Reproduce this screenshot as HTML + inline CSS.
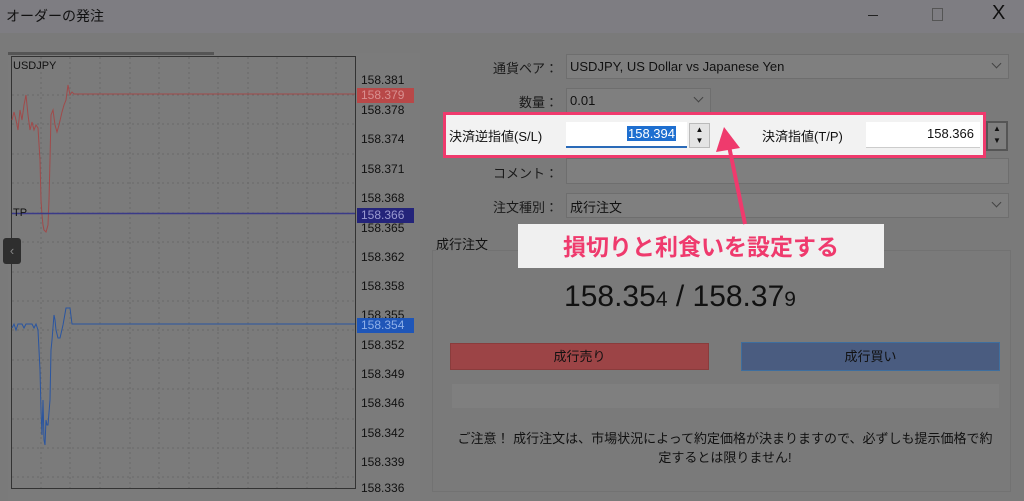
<!DOCTYPE html>
<html><head><meta charset="utf-8"><style>
*{margin:0;padding:0;box-sizing:border-box}
body{width:1024px;height:501px;overflow:hidden;background:#7a7a7a;font-family:"Liberation Sans","Noto Sans CJK JP",sans-serif;color:#111;position:relative}
.a{position:absolute}
.lbl{position:absolute;font-size:13px;color:#1a1a1a;text-align:right;width:140px}
.box{position:absolute;background:#7f7f7f;border:1px solid #6e6e6e}
.pr{position:absolute;left:361px;font-size:12px;color:#111}
.chev{position:absolute;right:8px;top:5px;width:7px;height:7px;border-right:1px solid #444;border-bottom:1px solid #444;transform:rotate(45deg)}
</style></head><body>
<div class="a" style="left:0;top:0;width:1024px;height:33px;background:#7e7d82"></div>
<div class="a" style="left:6px;top:6px;font-size:14px;color:#111">オーダーの発注</div>
<div class="a" style="left:868px;top:15px;width:10px;height:1px;background:#222"></div>
<div class="a" style="left:932px;top:8px;width:11px;height:13px;border:1px solid #555"></div>
<div class="a" style="left:992px;top:2px;font-size:20px;color:#111">X</div>

<div class="a" style="left:8px;top:53px;width:412px;height:448px;background:#7b7b7b"></div>
<div class="a" style="left:8px;top:52px;width:206px;height:3px;background:#555"></div>
<svg class="a" style="left:0;top:0" width="420" height="501">
<g stroke="#6a6a6a" stroke-dasharray="2,3" stroke-width="1">
<line x1="41" y1="57" x2="41" y2="488"/><line x1="70" y1="57" x2="70" y2="488"/><line x1="100" y1="57" x2="100" y2="488"/><line x1="130" y1="57" x2="130" y2="488"/><line x1="159" y1="57" x2="159" y2="488"/><line x1="189" y1="57" x2="189" y2="488"/><line x1="218" y1="57" x2="218" y2="488"/><line x1="248" y1="57" x2="248" y2="488"/><line x1="277" y1="57" x2="277" y2="488"/><line x1="307" y1="57" x2="307" y2="488"/><line x1="336" y1="57" x2="336" y2="488"/>
<line x1="12" y1="95" x2="355" y2="95"/><line x1="12" y1="124" x2="355" y2="124"/><line x1="12" y1="154" x2="355" y2="154"/><line x1="12" y1="183" x2="355" y2="183"/><line x1="12" y1="213" x2="355" y2="213"/><line x1="12" y1="242" x2="355" y2="242"/><line x1="12" y1="272" x2="355" y2="272"/><line x1="12" y1="301" x2="355" y2="301"/><line x1="12" y1="330" x2="355" y2="330"/><line x1="12" y1="360" x2="355" y2="360"/><line x1="12" y1="389" x2="355" y2="389"/><line x1="12" y1="419" x2="355" y2="419"/><line x1="12" y1="448" x2="355" y2="448"/><line x1="12" y1="477" x2="355" y2="477"/>
</g>
<rect x="11.5" y="56.5" width="344" height="432" fill="none" stroke="#333"/>
<polyline fill="none" stroke="#a04a4a" stroke-width="1" points="12,120 14,112 16,120 18,130 20,110 22,120 24,105 26,95 28,115 30,130 32,122 34,130 36,125 38,128 40,160 41,200 42,215 43,225 44,230 46,232 48,225 49,200 50,160 51,115 53,110 55,125 57,132 59,125 62,112 64,105 66,100 68,85 70,95 72,92 74,94 355,94"/>
<line x1="12" y1="213.5" x2="355" y2="213.5" stroke="#3a3a88" stroke-width="1.5"/>
<polyline fill="none" stroke="#2a55a0" stroke-width="1" points="12,328 14,324 16,330 18,324 22,324 24,328 26,324 32,324 34,328 36,324 38,330 40,370 41,410 42,435 43,400 44,440 45,445 46,420 47,425 48,425 50,400 51,350 52,340 54,315 55,320 56,330 58,338 60,338 63,325 66,308 70,308 72,324 355,324"/>
</svg>
<div class="a" style="left:13px;top:60px;font-size:11px">USDJPY</div>
<div class="a" style="left:13px;top:207px;font-size:11px">TP</div>
<div class="a" style="left:3px;top:238px;width:18px;height:26px;background:#2e2e2e;border-radius:3px;color:#888;font-size:13px;text-align:center;line-height:26px">‹</div>
<div class="pr" style="top:73px">158.381</div>
<div class="pr" style="top:103px">158.378</div>
<div class="pr" style="top:132px">158.374</div>
<div class="pr" style="top:162px">158.371</div>
<div class="pr" style="top:191px">158.368</div>
<div class="pr" style="top:221px">158.365</div>
<div class="pr" style="top:250px">158.362</div>
<div class="pr" style="top:279px">158.358</div>
<div class="pr" style="top:308px">158.355</div>
<div class="pr" style="top:338px">158.352</div>
<div class="pr" style="top:367px">158.349</div>
<div class="pr" style="top:396px">158.346</div>
<div class="pr" style="top:426px">158.342</div>
<div class="pr" style="top:455px">158.339</div>
<div class="pr" style="top:481px">158.336</div>
<div class="a" style="left:357px;top:88px;width:57px;height:15px;background:#b84848;color:#d89090;font-size:12px;padding-left:4px">158.379</div>
<div class="a" style="left:357px;top:208px;width:57px;height:15px;background:#24247a;color:#9a9ad0;font-size:12px;padding-left:4px">158.366</div>
<div class="a" style="left:357px;top:318px;width:57px;height:15px;background:#1f56b8;color:#8fb0e8;font-size:12px;padding-left:4px">158.354</div>

<div class="lbl" style="left:418px;top:58px">通貨ペア：</div>
<div class="box" style="left:566px;top:54px;width:443px;height:25px"><span class="a" style="left:3px;top:4px;font-size:13px">USDJPY, US Dollar vs Japanese Yen</span><div class="chev"></div></div>
<div class="lbl" style="left:418px;top:92px">数量：</div>
<div class="box" style="left:566px;top:88px;width:145px;height:25px"><span class="a" style="left:3px;top:4px;font-size:13px">0.01</span><div class="chev"></div></div>
<div class="lbl" style="left:418px;top:163px">コメント：</div>
<div class="box" style="left:566px;top:158px;width:443px;height:26px"></div>
<div class="lbl" style="left:418px;top:197px">注文種別：</div>
<div class="box" style="left:566px;top:193px;width:443px;height:25px"><span class="a" style="left:3px;top:3px;font-size:13px">成行注文</span><div class="chev"></div></div>

<div class="a" style="left:985px;top:121px;width:23px;height:30px;background:#555"></div>
<div class="a" style="left:988px;top:123px;width:18px;height:26px;background:#7f7f7f;font-size:8px;text-align:center;line-height:12px">▲<br>▼</div>

<div class="a" style="left:443px;top:112px;width:543px;height:46px;border:3px solid #ef3a6d;background:#f2f2f2"></div>
<div class="a" style="left:449px;top:126px;font-size:13px">決済逆指値(S/L)</div>
<div class="a" style="left:566px;top:122px;width:121px;height:26px;background:#fff;border-bottom:2px solid #2a6ab8"></div>
<div class="a" style="left:627px;top:126px;font-size:13px;background:#1e6fd0;color:#fff;padding:0 1px">158.394</div>
<div class="a" style="left:689px;top:123px;width:21px;height:25px;background:#e4e4e4;border:1px solid #bbb;font-size:8px;text-align:center;line-height:11px">▲<br>▼</div>
<div class="a" style="left:762px;top:126px;font-size:13px">決済指値(T/P)</div>
<div class="a" style="left:866px;top:122px;width:114px;height:26px;background:#fff;border-bottom:1px solid #ccc"></div>
<div class="a" style="left:927px;top:126px;font-size:13px">158.366</div>

<div class="a" style="left:432px;top:250px;width:579px;height:242px;border:1px solid #727272"></div>
<div class="a" style="left:436px;top:234px;font-size:13px;background:#7a7a7a">成行注文</div>
<div class="a" style="left:420px;top:280px;width:520px;text-align:center;font-size:30px;color:#111">158.35<span style="font-size:21px">4</span> / 158.37<span style="font-size:21px">9</span></div>
<div class="a" style="left:450px;top:343px;width:259px;height:27px;background:#9c4446;border:1px solid #8a3c3c;text-align:center;font-size:13px;line-height:25px">成行売り</div>
<div class="a" style="left:741px;top:342px;width:259px;height:29px;background:#4a5c80;border:1px solid #3e6e9e;text-align:center;font-size:13px;line-height:27px">成行買い</div>
<div class="a" style="left:451px;top:383px;width:549px;height:26px;background:#7f7f7f;border:1px solid #7a7a7a"></div>
<div class="a" style="left:440px;top:429px;width:570px;text-align:center;font-size:13px;line-height:19px">ご注意！ 成行注文は、市場状況によって約定価格が決まりますので、必ずしも提示価格で約<br>定するとは限りません!</div>

<div class="a" style="left:518px;top:224px;width:366px;height:44px;background:#f0f0f0"></div>
<div class="a" style="left:518px;top:228px;width:366px;text-align:center;font-size:23px;font-weight:bold;color:#ef3a6d">損切りと利食いを設定する</div>
<svg class="a" style="left:0;top:0" width="1024" height="501">
<line x1="745" y1="224" x2="729" y2="146" stroke="#ef3a6d" stroke-width="4"/>
<polygon points="724,127 716,152 740,148" fill="#ef3a6d"/>
</svg>
</body></html>
